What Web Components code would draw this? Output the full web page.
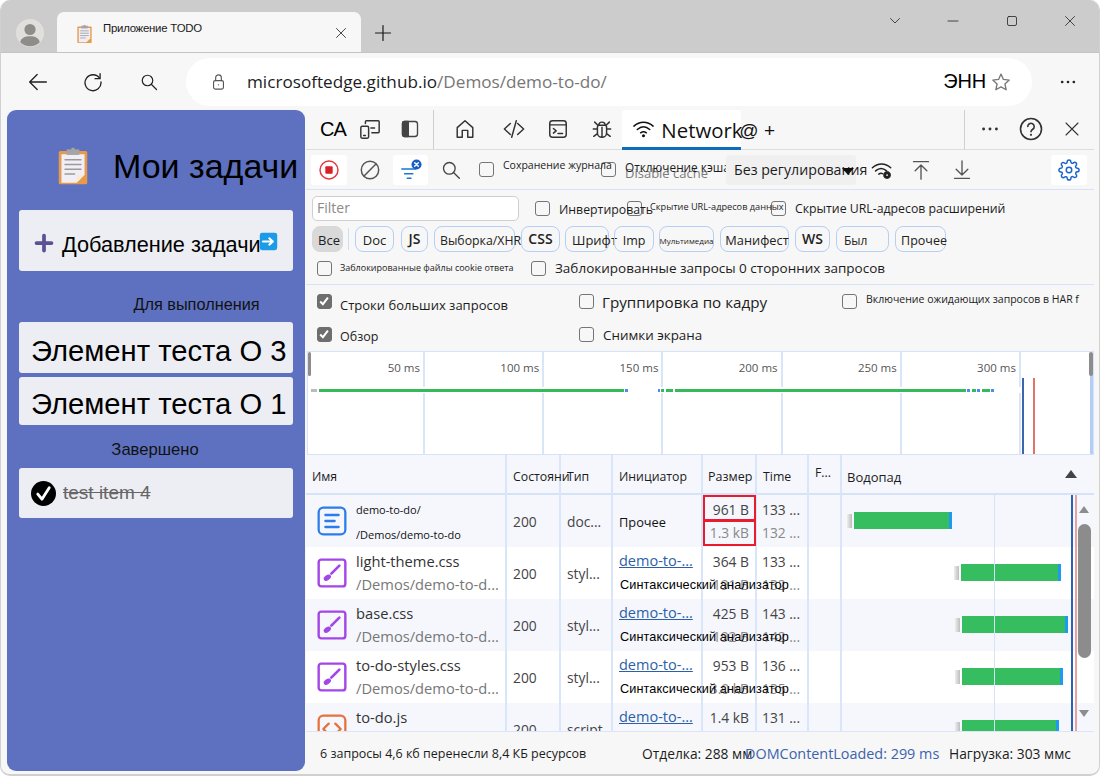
<!DOCTYPE html>
<html lang="ru"><head><meta charset="utf-8"><title>TODO</title>
<style>html,body{margin:0;height:100%;overflow:hidden;background:#fff}</style></head>
<body><app-window></app-window>
<script>
const ICONS={
back:'<path d="M22 12H2M11 3l-9 9 9 9"/>',
refresh:'<path d="M20 7.5A9.6 9.6 0 1 0 21.6 12"/><path d="M20.5 2v6h-6"/>',
search:'<circle cx="10" cy="10" r="7"/><path d="M15 15l7 7"/>',
lock:'<rect x="5" y="10" width="14" height="12" rx="2.5"/><path d="M8 10V6a4 4 0 0 1 8 0v4"/><circle cx="12" cy="16" r="1" fill="currentColor" stroke="none"/>',
star:'<path d="M12 2.5l2.9 6.4 7 .8-5.2 4.7 1.5 6.9-6.2-3.5-6.2 3.5 1.5-6.9-5.2-4.7 7-.8z"/>',
dots:'<circle cx="5" cy="12" r="1.6" fill="currentColor" stroke="none"/><circle cx="12" cy="12" r="1.6" fill="currentColor" stroke="none"/><circle cx="19" cy="12" r="1.6" fill="currentColor" stroke="none"/>',
chev:'<path d="M3 7l9 9 9-9"/>',min:'<path d="M2 12h20"/>',max:'<rect x="3" y="3" width="18" height="18" rx="3"/>',
close:'<path d="M3 3l18 18M21 3L3 21"/>',plus:'<path d="M12 2v20M2 12h20"/>',
device:'<rect x="2" y="9" width="8.5" height="13" rx="1.5"/><path d="M7 6V4a1 1 0 0 1 1-1h13a1 1 0 0 1 1 1v11a1 1 0 0 1-1 1h-7"/><path d="M13 11h4M5 19h2"/>',
dock:'<rect x="3" y="3" width="18" height="18" rx="3"/><path d="M5 3h5v18H5a2 2 0 0 1-2-2V5a2 2 0 0 1 2-2z" fill="currentColor"/>',
home:'<path d="M3.5 21V10.5L12 3l8.5 7.5V21h-5.5v-7.5H9V21z" stroke-linejoin="round"/>',
code:'<path d="M8 6l-6.5 6L8 18M16 6l6.5 6L16 18M14.5 3l-5 18"/>',
console:'<rect x="3" y="3" width="18" height="18" rx="3"/><path d="M3 7.5h18M7 11.5l3 2.5-3 2.5M12 17h5"/>',
bug:'<path d="M8 8h8a3 3 0 0 1 1 2v6a5 5 0 0 1-10 0v-6a3 3 0 0 1 1-2zM8.5 8a3.5 3.5 0 0 1 7 0M12 10v11M7 12H2.5M17 12h4.5M7 17l-4 3M17 17l4 3M7.500 8L4 4.500M16.500 8L20 4.500"/>',
wifi:'<path d="M2 9.500c6-5.500 14-5.500 20 0M5.500 13c4-3.500 9-3.500 13 0M9 16.500c2-1.500 4-1.500 6 0"/><circle cx="12" cy="19.500" r="1.600" fill="currentColor" stroke="none"/>',
help:'<circle cx="12" cy="12" r="10.500"/><path d="M8.800 9.500a3.200 3.200 0 1 1 4.900 2.700c-1 .6-1.700 1.300-1.700 2.600"/><circle cx="12" cy="17.800" r="1.100" fill="currentColor" stroke="none"/>',
record:'<circle cx="12" cy="12" r="9.800" stroke="#e5383b"/><rect x="8" y="8" width="8" height="8" rx="1" fill="#d92027" stroke="none"/>',
clear:'<circle cx="12" cy="12" r="9.500"/><path d="M5.500 18.500l13-13"/>',
filter:'<path d="M2 11h15M5 16h9M8 21h4" stroke="#1a73d8"/><circle cx="18" cy="6" r="5.500" fill="#1660c4" stroke="none"/><path d="M16 4l4 4M20 4l-4 4" stroke="#fff" stroke-width="1.500"/>',
wifigear:'<path d="M1.500 9.500c6-5.500 14-5.500 20 0M5 13c4-3.500 8-3.500 12 0M8.500 16.500c1.500-1.200 3-1.200 4 -.5"/><circle cx="17.500" cy="17.500" r="3" fill="#222" stroke="#222" stroke-width="2.500" stroke-dasharray="2 1.200"/><circle cx="17.500" cy="17.500" r="1" fill="#f7f7f7" stroke="none"/>',
up:'<path d="M3 2h18M12 6v17M5 13l7-7 7 7"/>',down:'<path d="M3 22h18M12 1v17M5 11l7 7 7-7"/>',
gear:'<circle cx="12" cy="12" r="3"/><path d="M19.400 15a1.650 1.650 0 0 0 .33 1.820l.06.06a2 2 0 0 1 0 2.830 2 2 0 0 1-2.830 0l-.06-.06a1.650 1.650 0 0 0-1.820-.33 1.650 1.650 0 0 0-1 1.510V21a2 2 0 0 1-2 2 2 2 0 0 1-2-2v-.09A1.650 1.650 0 0 0 9 19.400a1.650 1.650 0 0 0-1.820.33l-.06.06a2 2 0 0 1-2.830 0 2 2 0 0 1 0-2.830l.06-.06a1.650 1.650 0 0 0 .33-1.820 1.650 1.650 0 0 0-1.510-1H3a2 2 0 0 1-2-2 2 2 0 0 1 2-2h.09A1.650 1.650 0 0 0 4.600 9a1.650 1.650 0 0 0-.33-1.820l-.06-.06a2 2 0 0 1 0-2.830 2 2 0 0 1 2.830 0l.06.06a1.650 1.650 0 0 0 1.820.33H9a1.650 1.650 0 0 0 1-1.510V3a2 2 0 0 1 2-2 2 2 0 0 1 2 2v.09a1.650 1.650 0 0 0 1 1.510 1.650 1.650 0 0 0 1.820-.33l.06-.06a2 2 0 0 1 2.830 0 2 2 0 0 1 0 2.830l-.06.06a1.650 1.650 0 0 0-.33 1.820V9a1.650 1.650 0 0 0 1.510 1H21a2 2 0 0 1 2 2 2 2 0 0 1-2 2h-.09a1.650 1.650 0 0 0-1.510 1z"/>',
doc:'<rect x="2" y="2" width="20" height="20" rx="3.500" stroke="#2b7de9" stroke-width="1.700"/><path d="M7 7.500h10M7 12h7M7 16.500h10" stroke="#2b7de9" stroke-width="1.700"/>',
style:'<rect x="2" y="2" width="20" height="20" rx="2" stroke="#a445e8" stroke-width="1.800"/><path d="M11.500 12.500L17.500 6.500" stroke="#a445e8" stroke-width="2"/><ellipse cx="8.500" cy="15.500" rx="3" ry="1.900" transform="rotate(-35 8.500 15.500)" fill="#a445e8" stroke="none"/>',
script:'<rect x="2" y="2" width="20" height="20" rx="3.500" stroke="#e8703a" stroke-width="1.700"/><path d="M9.500 8l-4 4 4 4M14.500 8l4 4-4 4" stroke="#e8703a" stroke-width="1.700"/>',
user:'<circle cx="12" cy="12" r="12" fill="#e0dfdc" stroke="none"/><circle cx="12" cy="9" r="4.800" fill="#8f8d89" stroke="none"/><path d="M3.600 20c.8-3.600 3.800-5.200 8.400-5.200s7.600 1.600 8.400 5.200a12 12 0 0 1-16.800 0z" fill="#8f8d89" stroke="none"/>',
clip:'<rect x="3" y="2.500" width="18" height="21" rx="1" fill="#e59a4c" stroke="none"/><path d="M4.700 4.500h14.600v13l-5 5H4.700z" fill="#f1eef6" stroke="none"/><path d="M14.300 22.500v-5h5z" fill="#fbe9d3" stroke="none"/><rect x="8" y="1.500" width="8" height="3.500" fill="#a5a5a5" stroke="none"/><rect x="11" y=".5" width="2" height="2" fill="#a5a5a5" stroke="none"/><path d="M7 8h10M7 11h10M7 14h10M7 17h6" stroke="#9a9a9a" stroke-width="1"/>',
arrow:'<rect x="1" y="1" width="22" height="22" rx="3" fill="#1c9be6" stroke="none"/><path d="M5 12h12M13 8l4.500 4-4.500 4" stroke="#fff" stroke-width="2.600" fill="none"/>',
pluss:'<path d="M12 3v18M3 12h18" stroke-width="4.500"/>',
check:'<circle cx="12" cy="12" r="12" fill="#000" stroke="none"/><path d="M6.500 12.500l4 5 7-11" stroke="#fff" stroke-width="2.700" fill="none"/>'
};
function def(tag,css,render){customElements.define(tag,class extends HTMLElement{connectedCallback(){if(this.shadowRoot)return;const r=this.attachShadow({mode:'open'});r.innerHTML='<style>'+css+'</style>'+(typeof render==='function'?render(this):render);}});}
const A=(e,k,d='')=>e.getAttribute(k)??d;
const SEGOE='"Open Sans","Noto Sans",sans-serif', ARIAL='"Liberation Sans",Arial,sans-serif';

def('x-icon',':host{display:inline-flex;flex:none}svg{display:block;width:100%;height:100%;fill:none;stroke:currentColor;stroke-width:1.600;stroke-linecap:round;stroke-linejoin:round}',
 e=>`<svg viewBox="0 0 24 24" aria-hidden="true">${ICONS[A(e,'name')]||''}</svg>`);

def('app-window',`:host{display:flex;flex-direction:column;width:1100px;height:776px;box-sizing:border-box;background:#f7f7f7;border-radius:10px;overflow:hidden;border:1px solid #d0d0d0;border-width:0 1px 2px 1px;margin:0}
 .main{flex:1;display:flex;min-height:0;padding:0 5px 0 6px;gap:0}`,
 `<tab-strip></tab-strip><nav-bar></nav-bar><div class="main"><todo-panel></todo-panel><dev-tools></dev-tools></div>`);

def('tab-strip',`:host{display:flex;height:52px;background:#ccc;flex:none;box-sizing:border-box;padding-top:12px;color:#1a1a1a}
 .av{width:28px;height:28px;margin:7px 13px 0 15px}
 .tab{width:304px;height:40px;background:#f7f7f7;border-radius:7px 7px 0 0;display:flex;box-sizing:border-box;padding:0 13px 0 18px;position:relative}
 .fav{width:19px;height:22px;margin-top:11px}
 .t{font:11.400px/1 ${ARIAL};margin:11px 0 0 9px;letter-spacing:-.25px;flex:1;white-space:nowrap}
 .x{width:12px;height:12px;margin-top:15px;margin-right:1px}
 .p{width:18px;height:18px;margin:12px 0 0 13px}
 .ctl{margin-left:auto;display:flex;margin-top:-12px;align-items:center;height:41px;color:#222}
 .ctl x-icon{height:12px;width:12px}`,
 `<x-icon class="av" name="user"></x-icon><div class="tab"><x-icon class="fav" name="clip"></x-icon><span class="t">Приложение TODO</span><x-icon class="x" name="close"></x-icon></div><x-icon class="p" name="plus"></x-icon>
 <div class="ctl"><x-icon name="chev" style="margin-right:46px"></x-icon><x-icon name="min" style="margin-right:47px"></x-icon><x-icon name="max" style="margin-right:46px"></x-icon><x-icon name="close" style="margin-right:23px"></x-icon></div>`);

def('nav-bar',`:host{display:flex;height:58px;flex:none;align-items:center;box-sizing:border-box;color:#222;padding-bottom:5px;padding-top:5px;border-top:1px solid #c4c4c4}
 x-icon{width:20px;height:20px}
 .o{height:48px;border-radius:24px;background:#fff;display:flex;align-items:center;box-sizing:border-box;padding:0 21px 0 24px;margin-left:28px;width:846px}
 .u{font:17.150px ${SEGOE};color:#767676;margin-left:20px;flex:1;white-space:nowrap}
 .u b{font-weight:400;color:#1c1c1c}
 .e{font:20px ${ARIAL};color:#000;margin-right:5px;letter-spacing:-.2px}`,
 `<x-icon name="back" style="margin-left:27px"></x-icon><x-icon name="refresh" style="margin-left:35px"></x-icon><x-icon name="search" style="margin-left:37px;width:18px;height:18px"></x-icon>
 <div class="o"><x-icon name="lock" style="width:17px;height:18px;color:#555"></x-icon><span class="u"><b>microsoftedge.github.io</b>/Demos/demo-to-do/</span><span class="e">ЭНН</span><x-icon name="star" style="color:#777"></x-icon></div>
 <x-icon name="dots" style="margin-left:26px"></x-icon>`);

def('todo-card',`:host{display:flex;align-items:center;box-sizing:border-box;background:#edeef3;border-radius:3px;margin:0 12px;color:#000;font:var(--fs,29.200px) ${ARIAL};white-space:nowrap}`,'<slot></slot>');

def('todo-panel',`:host{display:flex;flex-direction:column;width:298px;height:661px;background:#5e71c0;border-radius:9px;flex:none;font-family:${ARIAL};color:#111}
 .h{display:flex;align-items:center;height:100px;box-sizing:border-box;padding:12px 0 0 47px;font-size:34px;color:#000;white-space:nowrap}
 .h x-icon{width:38px;height:38px;margin-right:21px}
 .lab{font-size:16.300px;text-align:center}
 s{color:#666;font-size:19px;margin-left:7px}`,
 `<div class="h"><x-icon name="clip"></x-icon>Мои задачи</div>
 <todo-card style="height:61px;--fs:21.700px;padding-left:15px;padding-top:8px"><x-icon name="pluss" style="width:20px;height:20px;color:#5b5294;margin:-4px 8px 0 0"></x-icon>Добавление задачи<x-icon name="arrow" style="width:19px;height:19px;margin-left:-2px;margin-top:-7px"></x-icon></todo-card>
 <div class="lab" style="margin:24px 0 9px 81px;line-height:18px">Для выполнения</div>
 <todo-card style="height:51px;padding:7px 0 0 12px">Элемент теста О 3</todo-card>
 <todo-card style="height:48px;padding:6px 0 0 12px;margin-top:4px">Элемент теста О 1</todo-card>
 <div class="lab" style="margin:16px 2px 9px 0;line-height:18px;font-size:16.600px">Завершено</div>
 <todo-card style="height:50px;padding-left:12px;--fs:17px"><x-icon name="check" style="width:25px;height:25px"></x-icon><s>test item 4</s></todo-card>`);

def('dt-check',`:host{display:inline-flex;align-items:center;flex:none;white-space:nowrap;color:#1c1c1c;height:100%;font:var(--fs,13px) ${SEGOE}}
 i{display:block;box-sizing:border-box;width:15px;height:15px;border:1.500px solid #757575;border-radius:3px;flex:none}
 :host([checked]) i{background:#6e6e6e;border-color:#6e6e6e}
 i svg{display:block;width:12px;height:12px;fill:none;stroke:#fff;stroke-width:2}
 span{display:block;margin-left:var(--gap,9px);transform:translateY(var(--dy,0))}`,
 e=>`<i>${e.hasAttribute('checked')?'<svg viewBox="0 0 12 12"><path d="M2.200 6.500l2.700 2.700 5-6.500"/></svg>':''}</i><span><slot></slot></span>`);

def('dt-chip',`:host{display:flex;align-items:center;justify-content:center;box-sizing:border-box;height:26px;border:1.500px solid #b7cff5;border-radius:8px;flex:none;font:var(--fs,13px) ${SEGOE};color:#222;white-space:nowrap;overflow:visible;padding-left:var(--pl,0);padding-top:var(--pt,3px)}
 :host([on]){background:#d9d9d9;border-color:#d9d9d9}`,'<slot></slot>');

def('dt-tabs',`:host{display:flex;align-items:stretch;height:40px;flex:none;box-sizing:border-box;color:#333;border-bottom:1px solid #dcdcdc;font-family:${SEGOE};position:relative}
 .sep{width:1px;background:#cfcfcf;flex:none}
 x-icon{width:22px;height:22px;align-self:center;margin-top:-1px}
 .ca{font:20px ${ARIAL};color:#000;align-self:center;margin-left:14px;letter-spacing:-.5px}
 .act{display:flex;align-items:center;margin-left:9px;width:119px;background:#fff;border-bottom:3px solid #0f6cbd;box-sizing:border-box;padding-left:10px;height:40px;white-space:nowrap;font-size:20.400px;color:#111;overflow:visible;border-radius:3px 3px 0 0}
 .act span{margin-left:6px;padding-top:3px}
 .more{font:19px ${ARIAL};color:#111;margin-left:-2px;width:40px;align-self:center;margin-top:3px;white-space:nowrap}`,
 `<span class="ca">СА</span><x-icon name="device" style="margin-left:13px"></x-icon><x-icon name="dock" style="margin-left:19px;width:20px;height:20px;color:#444"></x-icon><div class="sep" style="margin-left:13px"></div>
 <x-icon name="home" style="margin-left:20px"></x-icon><x-icon name="code" style="margin-left:27px"></x-icon><x-icon name="console" style="margin-left:22px"></x-icon><x-icon name="bug" style="margin-left:22px"></x-icon>
 <div class="act"><x-icon name="wifi" style="width:23px;height:23px;color:#111"></x-icon><span>Network</span></div><span class="more">@ +</span>
 <div class="sep" style="margin-left:185px"></div><x-icon name="dots" style="margin-left:14px"></x-icon><x-icon name="help" style="margin-left:18px;height:24px;width:24px"></x-icon><x-icon name="close" style="margin-left:21px;width:16px;height:16px"></x-icon>`);

def('dt-toolbar',`:host{display:flex;align-items:center;height:39px;flex:none;border-bottom:1px solid #d5e2f7;color:#444;font-family:${SEGOE};position:relative}
 .b{display:flex;align-items:center;justify-content:center;height:30px;flex:none;border-radius:3px}
 .w{background:#fff}
 x-icon{width:22px;height:22px}
 .dd{width:130px;background:#f0f0f0;justify-content:flex-start;padding-left:8px;box-sizing:border-box;font-size:14.200px;color:#1c1c1c;white-space:nowrap;position:relative}
 .tri{position:absolute;left:116px;top:13px;width:0;height:0;border:6px solid transparent;border-top:7px solid #111;border-bottom:0}
 .g{position:absolute;color:#7b7b7b;font-size:13px;left:319px;top:14px;white-space:nowrap}`,
 `<div class="b w" style="width:36px;margin-left:5px"><x-icon name="record"></x-icon></div>
 <div class="b" style="width:46px"><x-icon name="clear" style="color:#555"></x-icon></div>
 <div class="b w" style="width:35px"><x-icon name="filter" style="color:#1a73d8"></x-icon></div>
 <div class="b" style="width:46px"><x-icon name="search" style="width:20px;height:20px;color:#444"></x-icon></div>
 <dt-check style="width:122px;margin-left:5px;--fs:10.500px;--dy:-5px">Сохранение журнала</dt-check>
 <span class="g">Disable cache</span>
 <dt-check style="width:125px;--fs:11.800px;--dy:-3px">Отключение кэша</dt-check>
 <div class="b dd">Без регулирования<span class="tri"></span></div>
 <x-icon name="wifigear" style="margin-left:15px;color:#222"></x-icon>
 <x-icon name="up" style="margin-left:18px;color:#555;width:20px;height:20px"></x-icon>
 <x-icon name="down" style="margin-left:21px;color:#555;width:20px;height:20px"></x-icon>
 <div class="b w" style="width:36px;margin-left:auto;margin-right:7px"><x-icon name="gear" style="color:#1a66c9;stroke-width:1;width:22px;height:22px"></x-icon></div>`);

def('dt-filters',`:host{display:block;flex:none;height:95px;border-bottom:1px solid #d5e2f7;box-sizing:border-box;font-family:${SEGOE}}
 .r{display:flex;align-items:center}
 .in{width:207px;height:25px;box-sizing:border-box;border:1.500px solid #cfcfcf;border-radius:5px;background:#fff;font-size:14px;color:#8a8a8a;line-height:22px;padding-left:4px;margin-left:6px;flex:none}
 .sp{width:1px;height:22px;background:#cfdcf3;flex:none}`,
 `<div class="r" style="height:35px;padding-top:1px;box-sizing:border-box"><div class="in">Filter</div>
   <dt-check style="width:92px;margin-left:16px;--fs:12.300px;--dy:1px">Инвертировать</dt-check>
   <dt-check style="width:144px;--fs:9.200px;--gap:8px;--dy:-2px">Скрытие URL-адресов данных</dt-check>
   <dt-check style="--fs:12.300px;--gap:9px">Скрытие URL-адресов расширений</dt-check></div>
 <div class="r" style="height:27px;padding-left:6px">
   <dt-chip on style="width:31px;--pl:3px">Все</dt-chip><div class="sp" style="margin:0 6px 0 5px"></div>
   <dt-chip style="width:39px;margin-right:7px">Doc</dt-chip><dt-chip style="width:27px;margin-right:6px;font-weight:600;--fs:14px;--pt:0">JS</dt-chip><dt-chip style="width:81px;margin-right:6px;--fs:12.300px;--pl:12px">Выборка/XHR</dt-chip><dt-chip style="width:39px;margin-right:5px;font-weight:600;--fs:14px;--pt:0">CSS</dt-chip><dt-chip style="width:44px;margin-right:5px;--pl:15px;--fs:13px">Шрифт</dt-chip><dt-chip style="width:40px;margin-right:5px;--fs:12.500px">Imp</dt-chip><dt-chip style="width:55px;margin-right:6px;--fs:8px">Мультимедиа</dt-chip><dt-chip style="width:69px;margin-right:6px;--pl:5px;--fs:12.800px">Манифест</dt-chip><dt-chip style="width:35px;margin-right:6px;font-weight:600;--fs:14px;--pt:0">WS</dt-chip><dt-chip style="width:53px;margin-right:6px;--fs:12px;justify-content:flex-start;--pl:7px">Был</dt-chip><dt-chip style="width:51px;--pl:7px;--fs:12.500px">Прочее</dt-chip></div>
 <div class="r" style="height:32px;padding-left:11px">
   <dt-check style="width:214px;--fs:9px;--dy:-1px;--gap:8px">Заблокированные файлы cookie ответа</dt-check>
   <dt-check style="--fs:13.500px">Заблокированные запросы 0 сторонних запросов</dt-check></div>`);

def('dt-settings',`:host{display:grid;flex:none;height:66px;grid-template-columns:262px 263px 1fr;grid-template-rows:33px 33px;padding-left:11px}`,
 `<dt-check checked style="--dy:3px;--fs:13px;--gap:8px">Строки больших запросов</dt-check>
 <dt-check style="--fs:15.200px;--gap:8px">Группировка по кадру</dt-check>
 <dt-check style="--fs:10.500px;--dy:-3px">Включение ожидающих запросов в HAR f</dt-check>
 <dt-check checked style="--dy:2px;--fs:12.500px;--gap:8px">Обзор</dt-check>
 <dt-check style="--fs:13.400px;--gap:9px">Снимки экрана</dt-check>`);

def('dt-overview',`:host{display:grid;position:relative;flex:none;height:104px;margin-left:1px;box-sizing:border-box;border:1px solid #d5e2f7;background:#fff;grid-template-columns:117px repeat(5,119.200px) 1fr;font:11.500px ${SEGOE};color:#555}
 div.c{border-right:2px solid #d9e5f8;text-align:right;padding:8px 3px 0 0;box-sizing:border-box}
 div.c:last-of-type{border:0}
 .o{position:absolute}
 .band{left:0;right:0;top:35px;height:6px;background:#fff}
 .seg{top:37px;height:3px;background:#35b95a}
 .bl{top:37px;height:3px;background:#4a8cf0}`,
 `<div class="c">50 ms</div><div class="c">100 ms</div><div class="c">150 ms</div><div class="c">200 ms</div><div class="c">250 ms</div><div class="c">300 ms</div><div class="c"></div>
 <span class="o band"></span>
 <span class="o" style="top:37px;height:3px;left:3px;width:6px;background:#bbb"></span>
 <span class="o seg" style="left:11px;width:305px"></span><span class="o bl" style="left:317px;width:3px"></span>
 <span class="o bl" style="left:350px;width:2px"></span><span class="o seg" style="left:353px;width:3px"></span><span class="o seg" style="left:358px;width:7px"></span><span class="o seg" style="left:367px;width:291px"></span><span class="o bl" style="left:659px;width:3px"></span><span class="o seg" style="left:664px;width:4px"></span><span class="o bl" style="left:669px;width:3px"></span><span class="o seg" style="left:674px;width:8px"></span><span class="o bl" style="left:683px;width:3px"></span>
 <span class="o" style="left:714px;top:26px;bottom:0;width:1.500px;background:#3b66ad"></span><span class="o" style="left:725px;top:26px;bottom:0;width:2px;background:#e2736c"></span>
 <span class="o" style="right:0;top:19px;bottom:0;width:3px;background:#b3cdf7"></span>
 <span class="o" style="left:0;top:0;height:24px;width:3px;background:#8c8c8c;border-radius:2px"></span>
 <span class="o" style="right:0;top:0;height:24px;width:4px;background:#8c8c8c;border-radius:2px"></span>`);

const COLS='200px 54px 52px 90px 54px 52px 33px 1fr';
def('net-head',`:host{display:grid;grid-template-columns:${COLS};height:40px;flex:none;box-sizing:border-box;background:#f5f7fd;border-bottom:2px solid #d5e2f7;font:12.300px ${SEGOE};color:#1c1c1c;position:relative;padding-left:1px}
 div{border-right:2px solid #d9e5f8;padding-left:6px;line-height:44px;white-space:nowrap;box-sizing:border-box}
 div:last-of-type{border:0}
 .tri{position:absolute;right:17px;top:15px;width:0;height:0;border:6.500px solid transparent;border-bottom:8px solid #444;border-top:0}`,
 `<div style="padding-left:5px">Имя</div><div>Состояни</div><div>Тип</div><div>Инициатор</div><div style="padding-left:5px;font-size:12.500px">Размер</div><div>Time</div><div style="line-height:36px">F...</div><div style="padding-left:5px;font-size:13px">Водопад</div><span class="tri"></span>`);

def('net-row',`:host{display:grid;grid-template-columns:${COLS};height:52px;flex:none;font:13.800px/23px ${SEGOE};color:#444;padding-left:1px;overflow:hidden}
 :host([alt]){background:#f5f7fd}
 :host(:not([alt])){background:#fff}
 .c{border-right:2px solid #d9e5f8;box-sizing:border-box;white-space:nowrap;min-width:0}
 .n{display:flex;align-items:center;padding-left:9px}
 .n x-icon{width:32px;height:32px;margin-right:8px;align-self:flex-start;margin-top:10px}
 .nt{min-width:0;flex:1;font-size:14.700px;padding-top:3px;align-self:flex-start}
 .nt div{overflow:hidden;text-overflow:ellipsis;color:#333}
 .nt div+div{color:#777}
 :host([small]) .nt{padding-top:2px}
 :host([small]) .nt div{font-size:11px;color:#111!important;line-height:25px}
 .mid{display:flex;align-items:center;padding-left:6px}
 .in{padding:2px 0 0 6px;position:relative;line-height:24px}
 .in a{color:#2b5fa8;text-decoration:underline;display:block;font-size:14.500px}
 .in em{font:normal 12.700px/24px ${ARIAL};color:#000;position:relative;z-index:2;letter-spacing:.1px;display:block;margin-left:1px}
 .sz{text-align:right;padding:3px 6px 0 0}
 .ti{padding:3px 0 0 5px}
 .sz span,.ti span{display:block;color:#888}
 .w{display:flex;align-items:center;border:0;padding-bottom:1px}
 .tk{width:5px;height:14px;background:linear-gradient(90deg,#eee,#bdbdbd);flex:none;margin-right:2px}
 .gr{height:17px;background:#35bd5f;flex:none}
 .bl{height:17px;width:3px;background:#1e9bf0;flex:none}`,
 e=>{const init=A(e,'init');return `<div class="c n"><x-icon name="${A(e,'icon')}"></x-icon><div class="nt"><div>${A(e,'name')}</div><div>${A(e,'path')}</div></div></div>
 <div class="c mid">200</div><div class="c mid">${A(e,'type')}</div>
 <div class="c in">${init?`<a>${init}</a><em>Синтаксический анализатор</em>`:'<div style="line-height:50px;color:#111;font-size:12.800px;">Прочее</div>'}</div>
 <div class="c sz">${A(e,'size')}<span>${A(e,'size2')}</span></div><div class="c ti">${A(e,'time')}<span>${A(e,'time2')}</span></div><div class="c"></div>
 <div class="c w"><span class="tk" style="margin-left:${A(e,'x')}px"></span><span class="gr" style="width:${A(e,'bw')}px"></span><span class="bl"></span></div>`});

def('net-table',`:host{display:flex;flex-direction:column;flex:none;height:276px;position:relative;overflow:hidden}
 .b{position:relative;flex:1;overflow:hidden;min-height:0}
 .l{position:absolute;top:0;bottom:0;z-index:3}
 .bx{position:absolute;left:397px;width:53px;height:26px;box-sizing:border-box;border:2.500px solid #e81c2e;z-index:5}
 .sb{position:absolute;z-index:4;left:772px;width:13px;top:0;bottom:0}
 .th{position:absolute;left:0;top:29px;width:13px;height:134px;background:#8c8c8c;border-radius:7px}
 .u,.d{position:absolute;left:1px;width:0;height:0;border:5.500px solid transparent}
 .u{top:11px;border-bottom:7px solid #8c8c8c;border-top:0}
 .d{top:215px;border-top:7px solid #8c8c8c;border-bottom:0}`,
 `<net-head></net-head><div class="b">
 <net-row alt small icon="doc" name="demo-to-do/" path="/Demos/demo-to-do" type="doc..." size="961 B" size2="1.3 kB" time="133 ..." time2="132 ..." x="5" bw="95"></net-row>
 <net-row icon="style" name="light-theme.css" path="/Demos/demo-to-d..." type="styl..." init="demo-to-..." size="364 B" size2="191 B" time="133 ..." time2="132 ..." x="112" bw="97"></net-row>
 <net-row alt icon="style" name="base.css" path="/Demos/demo-to-d..." type="styl..." init="demo-to-..." size="425 B" size2="192 B" time="143 ..." time2="142 ..." x="113" bw="103"></net-row>
 <net-row icon="style" name="to-do-styles.css" path="/Demos/demo-to-d..." type="styl..." init="demo-to-..." size="953 B" size2="3.0 kB" time="136 ..." time2="135 ..." x="113" bw="98"></net-row>
 <net-row alt icon="script" name="to-do.js" path="/Demos/demo-to-d..." type="script" init="demo-to-..." size="1.4 kB" size2="" time="131 ..." time2="" x="113" bw="94"></net-row>
 <span class="l" style="left:688px;width:1px;background:#d5e2f7"></span>
 <span class="l" style="left:765px;width:1.500px;background:#2a62b5"></span><span class="l" style="left:769px;width:2px;background:#e6a3a0"></span>
 <span class="bx" style="top:0"></span><span class="bx" style="top:25px"></span>
 <div class="sb"><span class="u"></span><span class="th"></span><span class="d"></span></div></div>`);

def('net-foot',`:host{display:flex;flex:none;height:31px;align-items:center;box-sizing:border-box;border-top:1px solid #dbe5f7;font:12.500px ${SEGOE};color:#1c1c1c;white-space:nowrap;padding-left:14px;padding-top:12px}
 span{flex:none}`,
 `<span style="width:322px">6 запросы 4,6 кб перенесли 8,4 КБ ресурсов</span><span style="width:103px;font-size:13.800px">Отделка: 288 мм</span><span style="width:204px;color:#3c63ad;font-size:14.400px">DOMContentLoaded: 299 ms</span><span style="font-size:13.800px">Нагрузка: 303 ммс</span>`);

def('dev-tools',`:host{display:flex;flex-direction:column;width:788px;height:652px;flex:none;margin-left:1px;overflow:hidden}`,
 `<dt-tabs></dt-tabs><dt-toolbar></dt-toolbar><dt-filters></dt-filters><dt-settings></dt-settings><dt-overview></dt-overview><net-table></net-table><net-foot></net-foot>`);
</script></body></html>
